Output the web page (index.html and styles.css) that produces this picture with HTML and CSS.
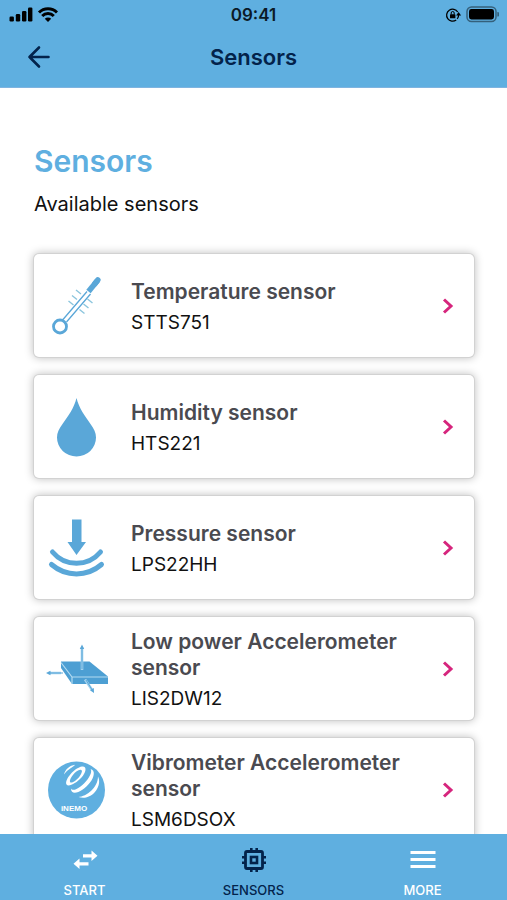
FILE: index.html
```html
<!DOCTYPE html>
<html lang="en">
<head>
<meta charset="utf-8">
<meta name="viewport" content="width=device-width, initial-scale=1">
<title>Sensors</title>
<link rel="stylesheet" href="styles.css">
</head>
<body>
<header class="top">
  <div class="status">
    <div class="status-left">
      <svg width="50" height="16" viewBox="0 0 50 16" aria-hidden="true">
        <rect x="1.500" y="9.500" width="4.400" height="5" rx="1.200"/>
        <rect x="7.800" y="7" width="4.400" height="7.500" rx="1.200"/>
        <rect x="14" y="4" width="4.400" height="10.500" rx="1.200"/>
        <rect x="20" y="0.500" width="4.400" height="14" rx="1.200"/>
        <g fill="none" stroke="#000" stroke-width="3">
          <path d="M31 5.500a12.600 12.600 0 0 1 18 0"/>
          <path d="M34.200 9a8.200 8.200 0 0 1 11.600 0"/>
        </g>
        <path d="M40 15l-3.200-3.200a4.500 4.500 0 0 1 6.400 0z"/>
      </svg>
    </div>
    <time class="clock">09:41</time>
    <div class="status-right">
      <svg width="54" height="18" viewBox="0 0 54 18" aria-hidden="true">
        <path d="M12.700 6A6 6 0 1 0 11.200 14" fill="none" stroke="#000" stroke-width="1.300"/>
        <path d="M12.200 12.800A6 6 0 0 0 13.600 8.500" fill="none" stroke="#000" stroke-width="1.300"/>
        <path d="M11.100 9.500h5l-2.500-3.500z"/>
        <rect x="5" y="8.300" width="5.400" height="4" rx=".6"/>
        <path d="M6.200 8.500V7a1.500 1.500 0 0 1 3 0v1.500" fill="none" stroke="#000"/>
        <rect x="22" y="1" width="29" height="14.500" rx="4.500" fill="none" stroke="#000" stroke-opacity=".45" stroke-width="1.500"/>
        <rect x="24" y="3" width="25" height="10.500" rx="2.400"/>
        <path d="M52.300 6a2.200 2.200 0 0 1 0 4.500z" fill-opacity=".45"/>
      </svg>
    </div>
  </div>
  <div class="bar">
    <button class="back" type="button" aria-label="Back">
      <svg width="24" height="24" viewBox="0 0 24 24" fill="none" stroke="#03234b" stroke-width="2.600" stroke-linecap="round" stroke-linejoin="round" aria-hidden="true"><path d="M21.500 12H2.500M12 2.500L2.500 12l9.500 9.500"/></svg>
    </button>
    <div class="bar-title">Sensors</div>
  </div>
</header>

<main class="content">
  <h1 class="heading">Sensors</h1>
  <p class="lead">Available sensors</p>
  <ul class="list">
    <li><a class="card" href="#temperature">
      <svg class="pic" viewBox="0 0 64 64" aria-hidden="true">
        <g fill="none" stroke="#5aa7d8">
          <path d="M18 45.500L42 17.500M21.500 48L45.500 20" stroke-width="1.300"/>
          <circle cx="15" cy="52.500" r="6.500" stroke-width="2.800"/>
          <path d="M43.500 17.500L52.500 6.500" stroke-width="5.600"/>
          <path d="M50 9.500L52.800 6" stroke-width="5.600" stroke-linecap="round"/>
          <path d="M31 16l5 4M27 21.500l5 4M23.500 27l5 4M42.500 25l5 4M38.500 30l5 4M34.500 35.500l5 4" stroke="#8bc5dd" stroke-width="1.400"/>
        </g>
      </svg>
      <span class="text"><span class="name">Temperature sensor</span><span class="model">STTS751</span></span>
      <svg class="chev" viewBox="0 0 12 18" aria-hidden="true"><path d="M2 2.500l7 6.500-7 6.500"/></svg>
    </a></li>
    <li><a class="card" href="#humidity">
      <svg class="pic" viewBox="0 0 64 64" aria-hidden="true"><path d="M31.500 3C34 13.500 40 21 45.500 29 49 34 51 37.500 51 42.500a19.500 19 0 0 1-39 0C12 37.500 14 34 17.500 29 23 21 29 13.500 31.500 3z" fill="#5aa7d8"/></svg>
      <span class="text"><span class="name">Humidity sensor</span><span class="model">HTS221</span></span>
      <svg class="chev" viewBox="0 0 12 18" aria-hidden="true"><path d="M2 2.500l7 6.500-7 6.500"/></svg>
    </a></li>
    <li><a class="card" href="#pressure">
      <svg class="pic" viewBox="0 0 64 64" aria-hidden="true">
        <path d="M27 3.500h9.500v22.500H41L31.500 39l-9-13H27z" fill="#5aa7d8"/>
        <path d="M7.500 36C20 51 43 51 55.500 36M6.500 48.500C21 61 42 61 56.500 48.500" fill="none" stroke="#5aa7d8" stroke-width="5" stroke-linecap="round"/>
      </svg>
      <span class="text"><span class="name">Pressure sensor</span><span class="model">LPS22HH</span></span>
      <svg class="chev" viewBox="0 0 12 18" aria-hidden="true"><path d="M2 2.500l7 6.500-7 6.500"/></svg>
    </a></li>
    <li><a class="card" href="#accelerometer">
      <svg class="pic" viewBox="0 0 64 64" aria-hidden="true">
        <path d="M16 24.500h28.500L63 39.500v7.500H27L16 31z" fill="#4d9fd3"/>
        <path d="M16 25.500l11 14.500h36M27 40v7" fill="none" stroke="#b4dcf2" stroke-width="1.200"/>
        <path d="M37 33V10M16 36H3.500M40 42.500l7.500 11" fill="none" stroke="#a3d2ee" stroke-width="2.600"/>
        <path d="M37 32V10M18 36H3.500M41 43l6.500 10.500" fill="none" stroke="#5aa7d8"/>
        <path d="M37 7.500l2.200 4.500h-4.400zM1 36l4.500-2.200v4.400zM49 56l-4-2.800 3.800-2.200z" fill="#5aa7d8"/>
      </svg>
      <span class="text"><span class="name">Low power Accelerometer sensor</span><span class="model">LIS2DW12</span></span>
      <svg class="chev" viewBox="0 0 12 18" aria-hidden="true"><path d="M2 2.500l7 6.500-7 6.500"/></svg>
    </a></li>
    <li><a class="card" href="#vibrometer">
      <svg class="pic" viewBox="0 0 64 64" aria-hidden="true">
        <circle cx="31.500" cy="32" r="28.500" fill="#5fafe0"/>
        <g fill="#fff">
          <path d="M19 16.500C20 11.500 25 7.500 30 6.800c-1.500 2.500-7.500 4.500-11 9.700z"/>
          <path fill-rule="evenodd" d="M21.500 26.500c-2.500-4.500 8-17 15.500-18 5.500-.5 4 6-.5 11-5 5.500-13 10-15 7zM25 24c1.500 2 6.500-1.500 9.500-5.500 2.500-3.500 3.500-6.500 1-6.700-4.300-.3-11.500 9-10.500 12.200z"/>
          <path d="M26 30.500c2 4 11-1.500 16.500-9 3.500-5 4.500-8.500 3-10.500 5 1 4 8-.5 13.500C38.500 33.500 26 39 26 30.500z"/>
          <path d="M33.500 39c8-.5 19.500-9.500 19.500-20.500 5 10-7 25-19.500 20.500z"/>
        </g>
        <text class="nemo" x="29" y="53" text-anchor="middle">iNEMO</text>
      </svg>
      <span class="text"><span class="name">Vibrometer Accelerometer sensor</span><span class="model">LSM6DSOX</span></span>
      <svg class="chev" viewBox="0 0 12 18" aria-hidden="true"><path d="M2 2.500l7 6.500-7 6.500"/></svg>
    </a></li>
  </ul>
</main>

<nav class="tabs">
  <a class="tab" href="#start">
    <svg width="28" height="28" viewBox="0 0 28 28" fill="#fff" aria-hidden="true"><path d="M12 8.200h8.500V4.500l6 5.300-6 5.300v-3.700H12zM17.500 16.200H8.500v-3.700L2.500 17.800l6 5.300v-3.700h9z"/></svg>
    <span>START</span>
  </a>
  <a class="tab tab-on" href="#sensors" aria-current="page">
    <svg width="28" height="28" viewBox="0 0 28 28" fill="none" stroke="#03234b" aria-hidden="true">
      <rect x="5.500" y="5.500" width="17" height="17" rx="1.500" stroke-width="2.800"/>
      <rect x="11" y="11" width="6" height="6" stroke-width="2.600"/>
      <path d="M11.300 2v3M16.700 2v3M11.300 23v3M16.700 23v3M2 11.300h3M2 16.700h3M23 11.300h3M23 16.700h3" stroke-width="2.600"/>
    </svg>
    <span>SENSORS</span>
  </a>
  <a class="tab" href="#more">
    <svg width="28" height="28" viewBox="0 0 28 28" fill="#fff" aria-hidden="true"><path d="M1.500 5h25v3h-25zM1.500 12h25v3h-25zM1.500 19h25v3h-25z"/></svg>
    <span>MORE</span>
  </a>
</nav>
</body>
</html>
```
FILE: styles.css
```css
* { box-sizing: border-box; }

body {
  margin: 0;
  height: 100vh;
  display: flex;
  flex-direction: column;
  background: #fff;
  font-family: Inter, "Liberation Sans", sans-serif;
  color: #111;
}

a { color: inherit; text-decoration: none; }
svg { display: block; flex: none; }

.top {
  flex: none;
  background: #5fafe0;
  border-bottom: 1px solid #7fb4e0;
}

.status {
  display: grid;
  grid-template-columns: 1fr auto 1fr;
  align-items: center;
  height: 29px;
  padding: 0 8px;
}

.status-right { justify-self: end; }
.clock { font-size: 17px; font-weight: 600; color: #0b1a26; }

.bar {
  display: grid;
  grid-template-columns: 48px 1fr 48px;
  align-items: center;
  height: 58px;
  padding: 0 16px 2px;
}

.back {
  display: flex;
  padding: 11px;
  border: 0;
  background: none;
}

.bar-title {
  text-align: center;
  font-size: 22px;
  font-weight: 600;
  color: #03234b;
}

.content {
  flex: 1;
  min-height: 0;
  overflow: hidden;
  padding: 52px 33px 0 34px;
}

.heading {
  margin: 0;
  font-size: 30px;
  line-height: 42px;
  font-weight: 600;
  color: #5fafe0;
}

.lead {
  margin: 8px 0 0;
  font-size: 20px;
  line-height: 28px;
}

.list {
  display: grid;
  gap: 18px;
  margin: 36px 0 0;
  padding: 0;
  list-style: none;
}

.card {
  display: flex;
  align-items: center;
  min-height: 103px;
  padding: 0 20px 0 11px;
  border-radius: 5px;
  background: #fff;
  box-shadow: 0 0 0 1px #d2d2d2, 0 0 8px 1px rgba(0, 0, 0, .25);
}

.pic { width: 64px; height: 64px; }

.text {
  flex: 1;
  display: grid;
  gap: 6px;
  padding: 2px 24px 0 22px;
}

.name {
  font-size: 21px;
  line-height: 26px;
  font-weight: 600;
  color: #4a4a50;
}

.model { font-size: 19px; line-height: 24px; }

.chev {
  width: 12px;
  height: 18px;
  fill: none;
  stroke: #d6257d;
  stroke-width: 3;
}

.nemo {
  font-family: "Liberation Sans", sans-serif;
  font-size: 8px;
  font-weight: 700;
  fill: #fff;
}

.tabs {
  flex: none;
  display: grid;
  grid-template-columns: repeat(3, 1fr);
  height: 66px;
  background: #5fafe0;
}

.tab {
  display: flex;
  flex-direction: column;
  align-items: center;
  gap: 8px;
  padding-top: 12px;
  font-size: 13px;
  line-height: 16px;
  font-weight: 500;
  color: #fff;
}

.tab-on { color: #03234b; }
```
